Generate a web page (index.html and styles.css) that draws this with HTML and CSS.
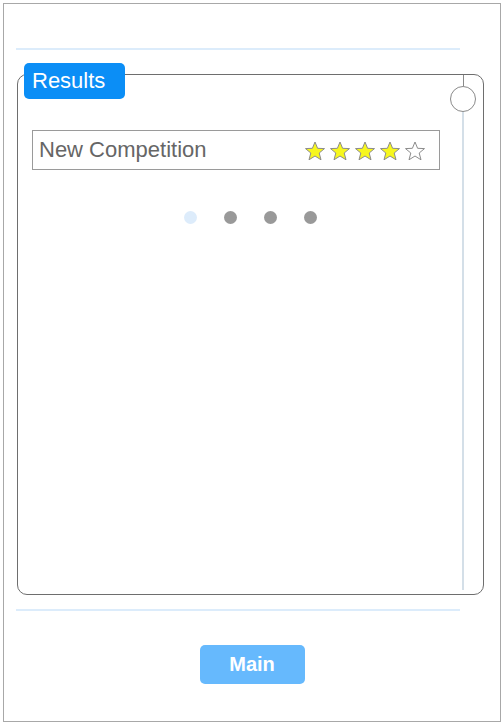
FILE: index.html
```html
<!DOCTYPE html>
<html lang="en">
<head>
  <meta charset="UTF-8" />
  <meta name="viewport" content="width=device-width, initial-scale=1.0"/>
  <title>Results</title>
  <link rel="stylesheet" href="styles.css">
</head>
<body>
<div class="frame">
  <div class="rule rule-top"></div>

  <div class="card">
    <div class="tab">Results</div>

    <!-- scroll bar on the right -->
    <div class="scroll">
      <div class="scroll-top"></div>
      <div class="scroll-knob"></div>
      <div class="scroll-track"></div>
    </div>

    <div class="item">
      <span class="item-name">New Competition</span>
      <div class="stars" id="stars"></div>
    </div>

    <div class="dots">
      <span class="dot active"></span>
      <span class="dot"></span>
      <span class="dot"></span>
      <span class="dot"></span>
    </div>
  </div>

  <div class="rule rule-bottom"></div>

  <div class="footer">
    <button class="main-btn">Main</button>
  </div>
</div>

<script>
  const stars = document.getElementById("stars");
  const rating = 4;

  for (let i = 0; i < 5; i++) {
    const fill = i < rating ? "#f7f71e" : "#ffffff";
    stars.innerHTML += `
      <svg class="star" width="22" height="20" viewBox="0 0 22 20">
        <polygon points="11,1 13.6,7.3 20.5,7.6 15.2,12 17,18.8 11,15 5,18.8 6.8,12 1.5,7.6 8.4,7.3"
          fill="${fill}" stroke="#8c8c8c" stroke-width="1" stroke-linejoin="round"/>
      </svg>`;
  }
</script>
</body>
</html>
```

FILE: styles.css
```css
body {
  margin: 0;
  font-family: "Liberation Sans", Arial, sans-serif;
  background: #ffffff;
}
.frame {
  margin: 3px;
  width: 496px;
  height: 717px;
  border: 1px solid #a8a8a8;
  display: flex;
  flex-direction: column;
  align-items: flex-start;
}
.rule {
  height: 2px;
  width: 444px;
  margin-left: 12px;
  background: #dcecfb;
}
.rule-top {
  margin-top: 44px;
}
.card {
  position: relative;
  margin-top: 24px;
  margin-left: 13px;
  width: 465px;
  height: 519px;
  border: 1px solid #6e6e6e;
  border-radius: 10px;
  display: flex;
  flex-direction: column;
  align-items: flex-start;
}
.tab {
  position: absolute;
  top: -12px;
  left: 6px;
  width: 101px;
  height: 36px;
  box-sizing: border-box;
  padding-left: 8px;
  background: #0b8ef6;
  color: #ffffff;
  border-radius: 5px;
  font-size: 22px;
  line-height: 36px;
}
.scroll {
  position: absolute;
  top: 0;
  right: 7px;
  bottom: 4px;
  width: 26px;
  display: flex;
  flex-direction: column;
  align-items: center;
}
.scroll-top {
  width: 1px;
  height: 11px;
  background: #8a8a8a;
}
.scroll-knob {
  width: 24px;
  height: 24px;
  border: 1px solid #8a8a8a;
  border-radius: 50%;
  background: #ffffff;
}
.scroll-track {
  width: 2px;
  flex: 1;
  background: #d4dfe8;
}
.item {
  margin-top: 55px;
  margin-left: 14px;
  height: 38px;
  border: 1px solid #9a9a9a;
  display: flex;
  align-items: center;
  justify-content: space-between;
  padding: 0 13px 0 6px;
  width: 387px;
}
.item-name {
  font-size: 22px;
  color: #666666;
}
.stars {
  display: flex;
  gap: 3px;
  margin-top: 1px;
}
.star {
  display: block;
}
.dots {
  align-self: stretch;
  display: flex;
  justify-content: center;
  gap: 27px;
  margin-top: 41px;
}
.dot {
  width: 13px;
  height: 13px;
  border-radius: 50%;
  background: #999999;
}
.dot.active {
  background: #ddecfb;
}
.rule-bottom {
  margin-top: 14px;
}
.footer {
  align-self: stretch;
  display: flex;
  justify-content: center;
  margin-top: 34px;
}
.main-btn {
  width: 105px;
  height: 39px;
  border: none;
  border-radius: 5px;
  background: #66b9fd;
  color: #ffffff;
  font-family: "Liberation Sans", Arial, sans-serif;
  font-weight: bold;
  font-size: 20px;
  cursor: pointer;
}
```
